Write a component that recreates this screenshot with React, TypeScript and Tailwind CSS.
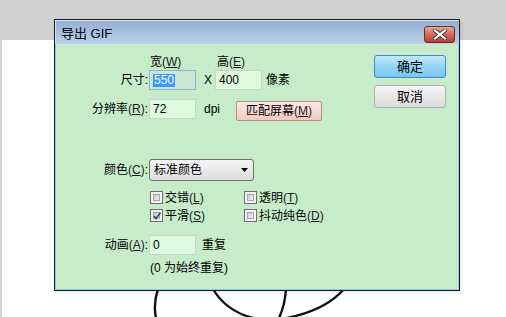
import React from 'react'

const font = "font-['Liberation_Sans','Noto_Sans_CJK_SC',sans-serif]"

function Key({ k }: { k: string }) {
  return (
    <span className="text-[#1a1a1a]">
      (<span className="underline underline-offset-[1px]">{k}</span>)
    </span>
  )
}

function Field({ value, selected, dim }: { value: string; selected?: boolean; dim?: boolean }) {
  return (
    <div
      className={`w-[47px] h-[20px] flex items-center pl-[3px] border text-[12px] ${
        dim ? 'bg-[#cde6d0] border-[#8fb3d6]' : 'bg-[#def9de] border-[#c4d6c4]'
      }`}
    >
      {selected ? <span className="bg-[#3399ff] text-white px-[1px] leading-[13px]">{value}</span> : <span>{value}</span>}
    </div>
  )
}

function Check({ label, k, checked }: { label: string; k: string; checked?: boolean }) {
  return (
    <div className="flex items-center gap-[2px] h-[15px]">
      <div className="relative w-[13px] h-[13px] border border-[#707070] bg-[#f4f4f4] p-[2px]">
        <div className="w-full h-full border border-[#a8a8a8] bg-gradient-to-br from-[#cbcbcb] to-[#f0f0f0]" />
        {checked && (
          <svg className="absolute left-[1px] top-[1px]" width="10" height="10" viewBox="0 0 10 10">
            <path d="M2 5 L4 7.5 L8.5 1.5" stroke="#2f4f80" strokeWidth="1.7" fill="none" />
          </svg>
        )}
      </div>
      <span>
        {label}
        <Key k={k} />
      </span>
    </div>
  )
}

export default function App() {
  return (
    <div className={`relative w-[506px] h-[317px] overflow-hidden bg-white text-[12px] leading-[14px] text-black ${font}`}>
      <div className="h-[40px] bg-[#d0d0d0]" />
      <div className="flex h-[277px]">
        <div className="w-[2px] bg-[#d4d4d4]" />
      </div>

      {/* sketch strokes on the canvas */}
      <svg className="absolute left-0 top-0" width="506" height="317" viewBox="0 0 506 317">
        <g stroke="#111" strokeWidth="2.4" fill="none" strokeLinecap="round">
          <path d="M158 289 Q153 304 156 318" />
          <path d="M213 289 Q226 311 253 318" />
          <path d="M286 289 Q285 305 279 318" />
          <path d="M344 289 Q326 310 287 318" />
        </g>
      </svg>

      {/* dialog window */}
      <div className="absolute left-[54px] top-[19px] w-[406px] h-[272px] border border-[#1b1b1b] flex flex-col shadow-[2px_2px_3px_rgba(0,0,0,0.08)]">
        <div className="h-[24px] flex items-center justify-between bg-gradient-to-b from-[#94afd2] to-[#bad1ea] border-t border-l border-[#d8e4f2] pl-[5px] pr-[4px]">
          <span className="text-[13px] leading-[15px] mt-[1px]">导出 GIF</span>
          <div className="w-[31px] h-[17px] mt-[3px] rounded-[3px] border border-[#6f2b2b] bg-gradient-to-b from-[#e7a797] via-[#d26a55] to-[#b8402d] flex items-center justify-center">
            <svg width="14" height="11" viewBox="0 0 14 11">
              <path d="M2 1.5 L12 9.5 M12 1.5 L2 9.5" stroke="#3d3d4a" strokeWidth="4" strokeLinecap="square" />
              <path d="M2 1.5 L12 9.5 M12 1.5 L2 9.5" stroke="#ffffff" strokeWidth="2" strokeLinecap="square" />
            </svg>
          </div>
        </div>

        <div className="flex-1 flex bg-[#c7ecc9] border-l border-r border-b border-[#8cc9ec]">
          <div className="w-[318px] flex flex-col pt-[11px]">
            {/* header */}
            <div className="flex h-[14px] pl-[94px]">
              <span className="w-[67px]">
                宽<Key k="W" />
              </span>
              <span>
                高<Key k="E" />
              </span>
            </div>

            {/* size */}
            <div className="flex items-center h-[20px] mt-[1px]">
              <span className="w-[92px] text-right">尺寸:</span>
              <div className="ml-[1px]">
                <Field value="550" selected dim />
              </div>
              <span className="ml-[8px] w-[8px]">X</span>
              <div className="ml-[3px]">
                <Field value="400" />
              </div>
              <span className="ml-[4px]">像素</span>
            </div>

            {/* resolution */}
            <div className="flex items-center h-[20px] mt-[9px]">
              <span className="w-[92px] text-right">
                分辨率<Key k="R" />:
              </span>
              <div className="ml-[1px]">
                <Field value="72" />
              </div>
              <span className="ml-[8px] w-[15px]">dpi</span>
              <div className="ml-[17px] mt-[3px] w-[86px] h-[20px] flex items-center justify-center rounded-[2px] border border-[#b78d82] bg-gradient-to-b from-[#fcebe6] to-[#f1c9bf]">
                匹配屏幕<Key k="M" />
              </div>
            </div>

            {/* colour */}
            <div className="flex items-center h-[22px] mt-[40px]">
              <span className="w-[92px] text-right">
                颜色<Key k="C" />:
              </span>
              <div className="ml-[1px] w-[105px] h-[22px] rounded-[3px] border border-[#707070] bg-gradient-to-b from-[#f4f4f4] to-[#dedede] flex items-center justify-between pl-[4px] pr-[5px]">
                <span>标准颜色</span>
                <svg width="7" height="4" viewBox="0 0 7 4">
                  <path d="M0 0 H7 L3.5 4 Z" fill="#000" />
                </svg>
              </div>
            </div>

            {/* options */}
            <div className="flex flex-col gap-[3px] mt-[9px] pl-[94px]">
              <div className="flex">
                <div className="w-[94px]">
                  <Check label="交错" k="L" />
                </div>
                <Check label="透明" k="T" />
              </div>
              <div className="flex">
                <div className="w-[94px]">
                  <Check label="平滑" k="S" checked />
                </div>
                <Check label="抖动纯色" k="D" />
              </div>
            </div>

            {/* animation */}
            <div className="flex items-center h-[20px] mt-[12px]">
              <span className="w-[92px] text-right">
                动画<Key k="A" />:
              </span>
              <div className="ml-[1px]">
                <Field value="0" />
              </div>
              <span className="ml-[6px]">重复</span>
            </div>
            <div className="mt-[6px] pl-[94px]">(0 为始终重复)</div>
          </div>

          <div className="w-[72px] flex flex-col gap-[7px] pt-[11px]">
            <button className="h-[23px] rounded-[3px] border border-[#3c8fc4] bg-gradient-to-b from-[#c4e8fb] via-[#95d4f7] to-[#78c6f1] text-[13px]">
              确定
            </button>
            <button className="h-[23px] rounded-[3px] border border-[#b0b0b0] bg-gradient-to-b from-[#f4f4f4] to-[#dcdcdc] text-[13px]">
              取消
            </button>
          </div>
        </div>
      </div>
    </div>
  )
}
